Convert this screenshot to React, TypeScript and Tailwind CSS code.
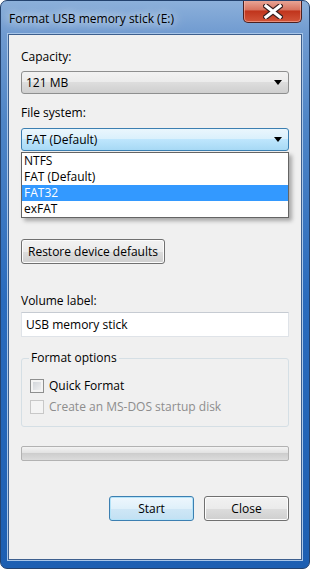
import { FC, ReactNode } from "react";

// Win7 style "Format" dialog
const font = "font-['Open_Sans',sans-serif]";

const Arrow = () => (
  <svg width="8" height="5" viewBox="0 0 8 5">
    <path d="M0 0h8L4 5z" fill="#000" />
  </svg>
);

const Combo: FC<{ value: string; open?: boolean }> = ({ value, open }) => (
  <div
    className={`h-[23px] flex items-center justify-between pl-[4px] pr-[6px] rounded-[3px] border ${
      open
        ? "border-[#3c7fb1] bg-[linear-gradient(#eaf6fd,#d9f0fc_50%,#bee6fd_50%,#a7d9f5)]"
        : "border-[#8e8f8f] bg-[linear-gradient(#f2f2f2,#ebebeb_50%,#dddddd_50%,#cfcfcf)]"
    }`}
  >
    <span className="text-[12px] leading-[16px] text-black">{value}</span>
    <Arrow />
  </div>
);

const Button: FC<{ children: ReactNode; primary?: boolean; className?: string }> = ({
  children,
  primary,
  className,
}) => (
  <div
    className={`h-[25px] flex items-center justify-center rounded-[3px] border text-[12px] leading-[16px] text-black ${
      primary
        ? "border-[#3c7fb1] bg-[linear-gradient(#eef7fd,#dff0fa_50%,#cfe7f6_50%,#c2e0f3)] shadow-[inset_0_0_0_1px_#b4e3f8]"
        : "border-[#707070] bg-[linear-gradient(#f2f2f2,#ebebeb_50%,#dddddd_50%,#cfcfcf)] shadow-[inset_0_0_0_1px_#fcfcfc]"
    } ${className ?? ""}`}
  >
    {children}
  </div>
);

const Check: FC<{ label: string; disabled?: boolean }> = ({ label, disabled }) => (
  <div className="flex items-center gap-[5px] h-[14px]">
    <div
      className={`w-[14px] h-[14px] border ${
        disabled
          ? "border-[#c8c8c8] bg-[#f4f4f4]"
          : "border-[#8e8f8f] bg-[linear-gradient(135deg,#cbcfd5,#f6f6f6)] shadow-[inset_0_0_0_2px_#f4f4f4]"
      }`}
    />
    <span className={`text-[12px] leading-[16px] ${disabled ? "text-[#8d8d8d]" : "text-black"}`}>
      {label}
    </span>
  </div>
);

export default function App() {
  const options = ["NTFS", "FAT (Default)", "FAT32", "exFAT"];
  return (
    <div
      className={`${font} w-[310px] h-[569px] flex flex-col rounded-[7px] border border-[#23426e] bg-[linear-gradient(to_bottom,#8cb0da_0px,#6f9ad0_34px,#4f85c6_120px,#2a6bbd_300px,#1d5fb2)] overflow-hidden`}
    >
      {/* title bar */}
      <div className="h-[33px] flex items-start justify-between pl-[8px] pr-[7px]">
        <span className="mt-[10px] text-[12px] leading-[16px] text-black [text-shadow:0_0_8px_#ffffff,0_0_14px_#e8f1fb]">
          Format USB memory stick (E:)
        </span>
        <div className="w-[59px] h-[23px] -mt-px flex items-center justify-center rounded-b-[5px] border border-t-0 border-[#4b2020] bg-[linear-gradient(#e9a99b,#d7735f_45%,#c0341c_50%,#d2553a)] shadow-[inset_0_0_0_1px_rgba(255,200,190,0.5)]">
          <svg width="20" height="15" viewBox="0 0 20 15">
            <path
              d="M3 2l14 11M17 2L3 13"
              stroke="#3a2020"
              strokeWidth="5.5"
              strokeLinecap="square"
            />
            <path
              d="M3 2l14 11M17 2L3 13"
              stroke="#ffffff"
              strokeWidth="3.2"
              strokeLinecap="square"
            />
          </svg>
        </div>
      </div>

      {/* client area */}
      <div className="mx-[7px] mb-[8px] flex-1 border border-[#3d5f8e] bg-[#f0f0f0] shadow-[0_0_0_1px_#a9c6e8]">
        <div className="relative h-full flex flex-col pl-[12px] pr-[12px] pt-[14px]">
          <span className="text-[12px] leading-[16px] text-black">Capacity:</span>
          <div className="mt-[6px]">
            <Combo value="121 MB" />
          </div>

          <span className="mt-[11px] text-[12px] leading-[16px] text-black">File system:</span>
          <div className="relative mt-[7px]">
            <Combo value="FAT (Default)" open />
            {/* open drop-down list */}
            <div className="absolute left-0 right-0 top-[24px] z-10 border border-[#646464] bg-white shadow-[3px_3px_4px_rgba(0,0,0,0.3)]">
              {options.map((o) => (
                <div
                  key={o}
                  className={`h-[16px] pl-[2px] text-[12px] leading-[16px] ${
                    o === "FAT32" ? "bg-[#3399ff] text-white" : "text-black"
                  }`}
                >
                  {o}
                </div>
              ))}
            </div>
          </div>

          <div className="mt-[88px]">
            <Button className="w-[144px]">Restore device defaults</Button>
          </div>

          <span className="mt-[29px] text-[12px] leading-[16px] text-black">Volume label:</span>
          <div className="mt-[3px] h-[25px] flex items-center pl-[4px] border border-[#dfe3e8] border-t-[#c6cbd2] bg-white text-[12px] leading-[16px] text-black">
            USB memory stick
          </div>

          {/* format options group */}
          <div className="relative mt-[21px] h-[69px] rounded-[3px] border border-[#d5dfe5] pl-[8px] pt-[20px] flex flex-col gap-[7px]">
            <span className="absolute left-[7px] -top-[9px] px-[2px] bg-[#f0f0f0] text-[12px] leading-[16px] text-black">
              Format options
            </span>
            <Check label="Quick Format" />
            <Check label="Create an MS-DOS startup disk" disabled />
          </div>

          <div className="mt-[19px] h-[15px] rounded-[2px] border border-[#b2b2b2] bg-[linear-gradient(#f3f3f3,#e2e2e2_45%,#cdcdcd_50%,#dcdcdc)]" />

          <div className="mt-[35px] flex justify-end gap-[10px]">
            <Button primary className="w-[85px]">
              Start
            </Button>
            <Button className="w-[85px]">Close</Button>
          </div>
        </div>
      </div>
    </div>
  );
}
